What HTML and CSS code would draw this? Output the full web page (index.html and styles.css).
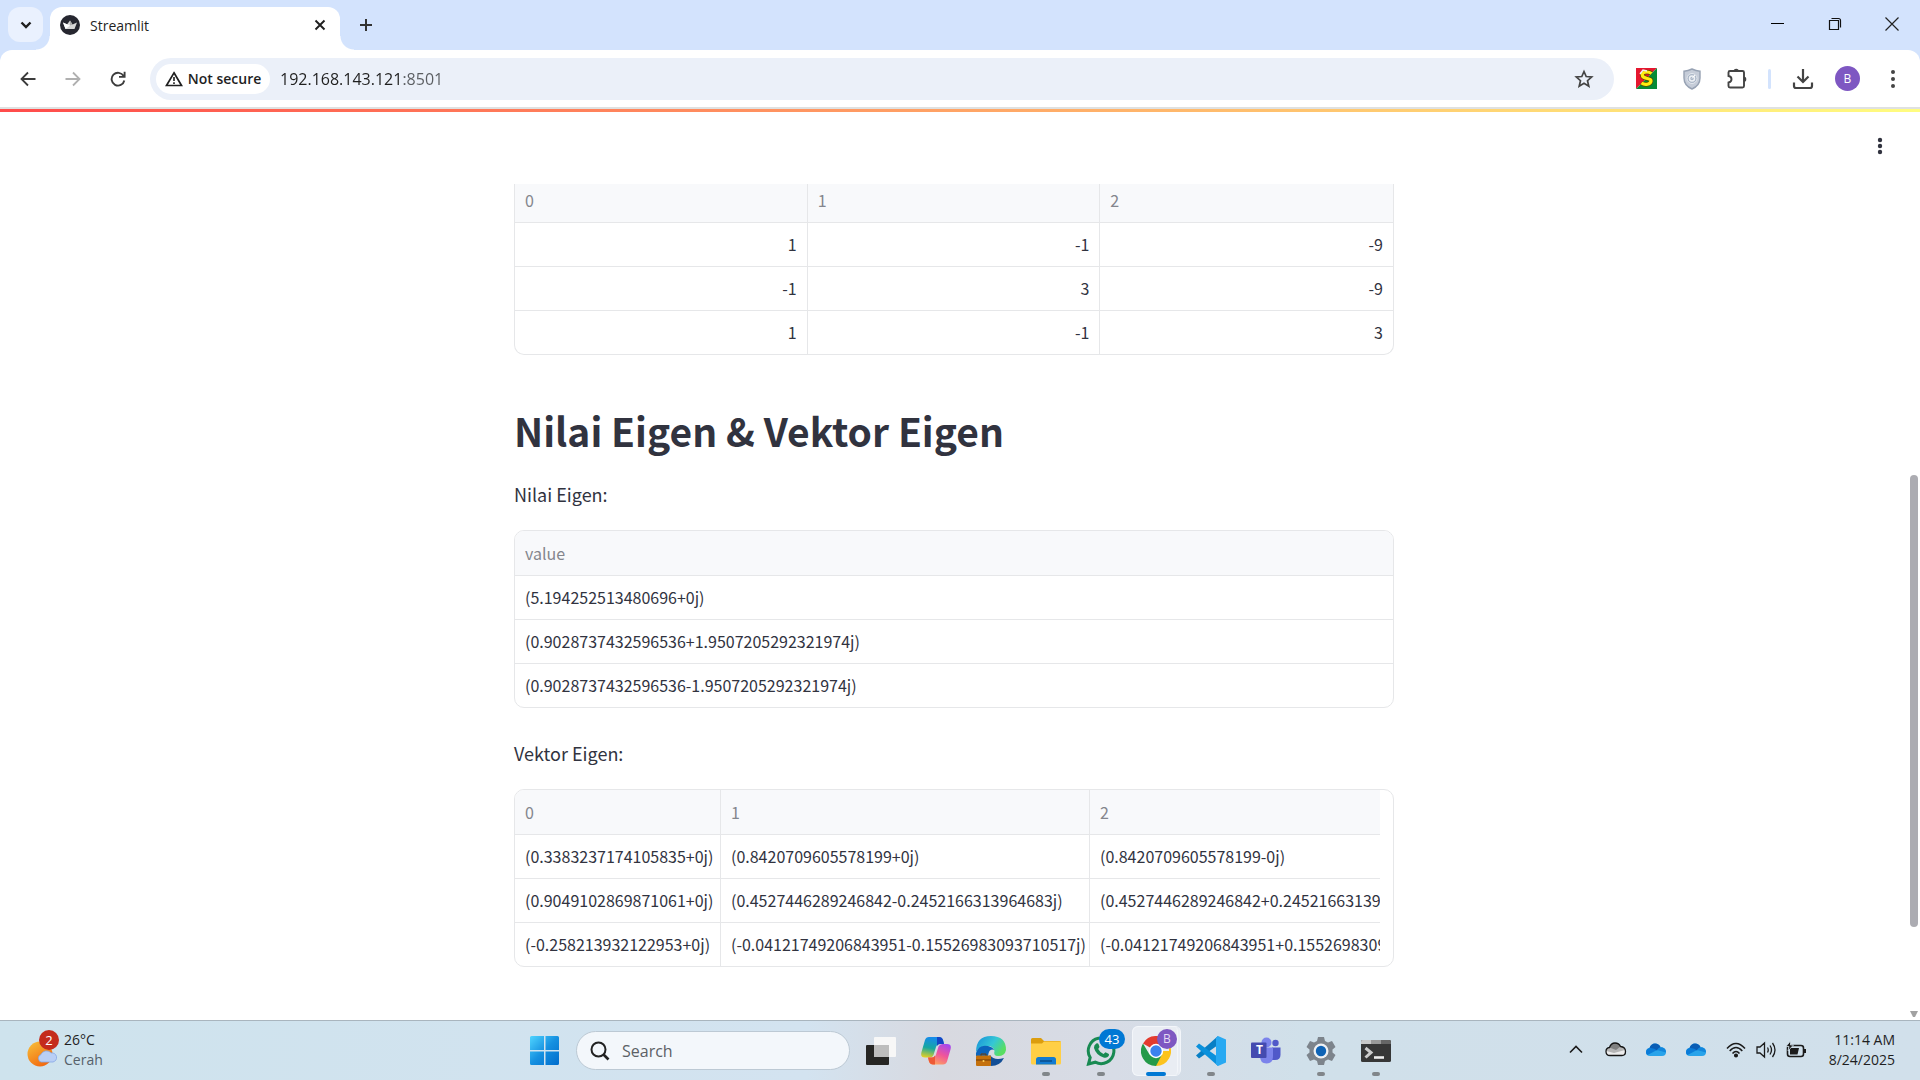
FILE: index.html
```html
<!DOCTYPE html>
<html lang="en">
<head>
<meta charset="utf-8">
<title>Streamlit</title>
<link rel="stylesheet" href="styles.css">
</head>
<body>
<div class="desktop">
  <header class="browser">
    <div class="tabstrip">
      <button class="tab-search" aria-label="Search tabs"><svg width="14" height="14" viewBox="0 0 14 14"><path d="M2.500 4.500L7 9l4.500-4.500" fill="none" stroke="#1f1f1f" stroke-width="2.400"/></svg></button>
      <div class="tab">
        <svg width="20" height="20" viewBox="0 0 20 20"><circle cx="10" cy="10" r="10" fill="#262730"/><path d="M3 7.500L7 9.500L10 5.500L12.500 9.500L17 7.500L14.500 14H5.500Z" fill="#d8d8d8"/><path d="M3 7.500L10 10.500L5.500 14Z" fill="#fff"/><path d="M17 7.500L10 10.500L10 5.500L12.500 9.500Z" fill="#aaa"/></svg>
        <span class="tab-title">Streamlit</span>
        <button class="icon-btn" aria-label="Close tab"><svg width="12" height="12" viewBox="0 0 12 12"><path d="M1.500 1.500l9 9m0-9l-9 9" stroke="#1f1f1f" stroke-width="1.900"/></svg></button>
      </div>
      <button class="new-tab" aria-label="New tab"><svg width="14" height="14" viewBox="0 0 14 14"><path d="M7 1v12M1 7h12" stroke="#333" stroke-width="2"/></svg></button>
      <div class="window-controls">
        <button aria-label="Minimize"><svg width="14" height="14" viewBox="0 0 14 14"><path d="M0 6.500h13" stroke="#000"/></svg></button>
        <button aria-label="Restore"><svg width="14" height="14" viewBox="0 0 14 14"><path d="M1.500 3.500h9v9h-9zM3.500 1.500h7q2 0 2 2v7" fill="none" stroke="#111" stroke-width="1.200"/></svg></button>
        <button aria-label="Close"><svg width="14" height="14" viewBox="0 0 14 14"><path d="M.5 .5l13 13m0-13l-13 13" stroke="#222" stroke-width="1.200"/></svg></button>
      </div>
    </div>
    <div class="toolbar">
      <div class="nav">
        <button aria-label="Back"><svg width="16" height="16" viewBox="0 0 16 16"><path d="M15.500 8H2M8 1.500L1.500 8L8 14.500" fill="none" stroke="#3c3c3c" stroke-width="1.800"/></svg></button>
        <button aria-label="Forward"><svg width="16" height="16" viewBox="0 0 16 16"><path d="M.5 8H14M8 1.500L14.500 8L8 14.500" fill="none" stroke="#b0b0b0" stroke-width="1.800"/></svg></button>
        <button aria-label="Reload"><svg width="16" height="16" viewBox="0 0 16 16"><path d="M13.600 5A6.400 6.400 0 1 0 14.300 9.500M14.600 .8V5.900H9" fill="none" stroke="#3c3c3c" stroke-width="1.900"/></svg></button>
      </div>
      <div class="omnibox">
        <button class="chip"><svg width="18" height="16" viewBox="0 0 18 16"><path d="M9 1.800L16.500 14.500H1.500Z" fill="none" stroke="#1f1f1f" stroke-width="1.700"/><path d="M9 6v4M9 11.200v1.800" stroke="#1f1f1f" stroke-width="1.600"/></svg>Not secure</button>
        <input class="url" type="text" aria-label="Address" value="192.168.143.121:8501">
        <button class="star" aria-label="Bookmark"><svg width="20" height="20" viewBox="0 0 20 20"><path d="M10 2.500L12.200 7.500L17.700 8L13.500 11.700L14.800 17.200L10 14.200L5.200 17.200L6.500 11.700L2.300 8L7.800 7.500Z" fill="none" stroke="#444" stroke-width="1.700"/></svg></button>
      </div>
      <div class="extensions">
        <button aria-label="S extension"><svg width="21" height="21" viewBox="0 0 21 21"><path d="M0 0H21L0 21Z" fill="#e5172f"/><path d="M21 0V21H0Z" fill="#078b36"/><path d="M15.500 5.500C11 2.500 5 4.500 6.500 8S15.500 9.500 15 13S9 17.500 5.500 15" fill="none" stroke="#5c4700" stroke-width="4.600"/><path d="M15.500 5.500C11 2.500 5 4.500 6.500 8S15.500 9.500 15 13S9 17.500 5.500 15" fill="none" stroke="#ffee10" stroke-width="3.200"/><path d="M4 6L7 2l4 1" stroke="#eee" stroke-width="1.500" fill="none"/></svg></button>
        <button aria-label="Shield extension"><svg width="18" height="22" viewBox="0 0 18 22"><path d="M9 1Q13 3 17 3.200V10Q17 17.500 9 21Q1 17.500 1 10V3.200Q5 3 9 1Z" fill="#c5ccd8" stroke="#97a2b3" stroke-width="1.400"/><circle cx="9" cy="10.500" r="5" fill="#a9b5c6" stroke="#e5e9ef"/><circle cx="9" cy="10.500" r="2.500" fill="none" stroke="#eef1f5" stroke-width="1.500"/><path d="M9 10.500l3-3.500" stroke="#fff"/></svg></button>
        <button aria-label="Extensions"><svg width="22" height="22" viewBox="0 0 22 22"><path d="M2.500 4.500Q2.500 3 4 3H16.500Q18 3 18 4.500V18Q18 19.500 16.500 19.500H4Q2.500 19.500 2.500 18V14.500Q5.500 14 5.500 11.200T2.500 8Z" fill="none" stroke="#444" stroke-width="1.900"/><path d="M7.500 3.500a2.700 2.700 0 0 1 5.400 0zM17.700 8.600a2.600 2.600 0 0 1 0 5.200z" fill="#444"/></svg></button>
        <span class="divider"></span>
        <button aria-label="Downloads"><svg width="22" height="22" viewBox="0 0 22 22"><path d="M11 1v12M5.500 8.500L11 14l5.500-5.500M2 14.500V18q0 2 2 2H18q2 0 2-2V14.500" fill="none" stroke="#444" stroke-width="2.200"/></svg></button>
        <button class="avatar">B</button>
        <button aria-label="Menu"><svg width="6" height="20" viewBox="0 0 6 20" fill="#444"><circle cx="3" cy="3" r="2"/><circle cx="3" cy="10" r="2"/><circle cx="3" cy="17" r="2"/></svg></button>
      </div>
    </div>
  </header>

  <div class="viewport">
    <div class="app">
      <div class="decoration"></div>
      <div class="app-header"><button aria-label="Main menu"><svg width="6" height="18" viewBox="0 0 6 18" fill="#31333f"><circle cx="3" cy="3" r="2.200"/><circle cx="3" cy="9" r="2.200"/><circle cx="3" cy="15" r="2.200"/></svg></button></div>
      <main class="block">
        <div class="frame frame-scrolled">
          <table class="data numeric">
            <thead><tr><th>0</th><th>1</th><th>2</th></tr></thead>
            <tbody>
              <tr><td>1</td><td>-1</td><td>-9</td></tr>
              <tr><td>-1</td><td>3</td><td>-9</td></tr>
              <tr><td>1</td><td>-1</td><td>3</td></tr>
            </tbody>
          </table>
        </div>
        <h1>Nilai Eigen &amp; Vektor Eigen</h1>
        <p>Nilai Eigen:</p>
        <div class="frame">
          <table class="data">
            <thead><tr><th>value</th></tr></thead>
            <tbody>
              <tr><td>(5.194252513480696+0j)</td></tr>
              <tr><td>(0.9028737432596536+1.9507205292321974j)</td></tr>
              <tr><td>(0.9028737432596536-1.9507205292321974j)</td></tr>
            </tbody>
          </table>
        </div>
        <p>Vektor Eigen:</p>
        <div class="frame">
          <div class="clip">
            <table class="data vectors">
              <colgroup><col class="col-a"><col class="col-b"><col class="col-b"></colgroup>
              <thead><tr><th>0</th><th>1</th><th>2</th></tr></thead>
              <tbody>
                <tr><td>(0.3383237174105835+0j)</td><td>(0.8420709605578199+0j)</td><td>(0.8420709605578199-0j)</td></tr>
                <tr><td>(0.9049102869871061+0j)</td><td>(0.4527446289246842-0.2452166313964683j)</td><td>(0.4527446289246842+0.2452166313964683j)</td></tr>
                <tr><td>(-0.258213932122953+0j)</td><td>(-0.04121749206843951-0.15526983093710517j)</td><td>(-0.04121749206843951+0.15526983093710517j)</td></tr>
              </tbody>
            </table>
          </div>
        </div>
      </main>
    </div>
    <div class="scrollbar"><span class="thumb"></span><svg width="8" height="6" viewBox="0 0 8 6"><path d="M0 0h8L5 6H3z" fill="#a2a2a2"/></svg></div>
  </div>

  <footer class="taskbar">
    <button class="weather">
      <span class="weather-icon">
        <svg width="30" height="36" viewBox="0 0 30 36"><defs><linearGradient id="sun" x1="0" y1="0" x2=".6" y2="1"><stop offset="0" stop-color="#f7c23a"/><stop offset="1" stop-color="#f26a10"/></linearGradient></defs><circle cx="13" cy="22" r="12.500" fill="url(#sun)"/><path d="M14 30a4 4 0 0 1 0-7.500a6 6 0 0 1 10-1.500a4.500 4.500 0 0 1 2 9z" fill="#b9cff5" stroke="#86a7e6" stroke-width=".8"/></svg>
        <span class="badge badge-red">2</span>
      </span>
      <span class="weather-text"><span>26°C</span><span class="muted">Cerah</span></span>
    </button>

    <div class="pinned">
      <button class="task" aria-label="Start"><svg width="30" height="30" viewBox="0 0 30 30"><defs><linearGradient id="win" x1="0" y1="0" x2="1" y2="1"><stop offset="0" stop-color="#4fd4ff"/><stop offset=".5" stop-color="#1590e0"/><stop offset="1" stop-color="#006ccc"/></linearGradient></defs><path d="M1.500 0H14V14H0V1.500Q0 0 1.500 0ZM15.500 0H27.500Q29 0 29 1.500V14H15.500ZM0 15.500H14V29H1.500Q0 29 0 27.500ZM15.500 15.500H29V27.500Q29 29 27.500 29H15.500Z" fill="url(#win)"/></svg></button>
      <label class="search"><svg width="20" height="20" viewBox="0 0 20 20"><circle cx="8.500" cy="8.500" r="7" fill="none" stroke="#222" stroke-width="2"/><path d="M13.500 13.500l5 5" stroke="#222" stroke-width="2.600"/></svg><input type="text" placeholder="Search" aria-label="Search"></label>
      <button class="task" aria-label="Task view"><svg width="30" height="28" viewBox="0 0 30 28"><rect y="8" width="23" height="20" rx="1" fill="#262624"/><rect x="8" width="22" height="20" rx="1" fill="#f7f7f7"/><rect x="8" y="8" width="15" height="12" fill="#bdbdbd"/></svg></button>
      <button class="task" aria-label="Copilot"><svg width="30" height="28" viewBox="0 0 30 28"><defs><linearGradient id="cpa" x1=".3" y1="0" x2=".1" y2="1"><stop offset="0" stop-color="#168bea"/><stop offset=".5" stop-color="#16a7a0"/><stop offset="1" stop-color="#f0d21c"/></linearGradient><linearGradient id="cpb" x1=".8" y1="0" x2=".3" y2="1"><stop offset="0" stop-color="#a547ef"/><stop offset=".5" stop-color="#f0559a"/><stop offset="1" stop-color="#ffa45c"/></linearGradient></defs><path d="M8 0H18Q21 0 22 3L23 7H19Q16 7 15 10L12.500 18Q11.500 20.500 8.500 20.500H4Q-1 20.500 .5 15L4 3Q5 0 8 0Z" fill="url(#cpa)"/><path d="M16 0h2q3 0 4 3l1 4h-4q-2 0-3 2z" fill="#1445c4"/><path d="M22 27.500H12Q9 27.500 8 24.500L7 20.500H11Q14 20.500 15 17.500L17.500 9.500Q18.500 7 21.500 7H26Q31 7 29.500 12.500L26 24.500Q25 27.500 22 27.500Z" fill="url(#cpb)"/><path d="M14 27.500h-2q-3 0-4-3l-1-4h4q2 0 3-2z" fill="#ee5a36"/></svg></button>
      <button class="task" aria-label="Edge"><svg width="30" height="30" viewBox="0 0 30 30"><defs><linearGradient id="edge" x1="0" y1="0" x2="1" y2=".5"><stop offset="0" stop-color="#168edb"/><stop offset=".6" stop-color="#35c7d5"/><stop offset="1" stop-color="#58de62"/></linearGradient></defs><path d="M0 16Q0 0 15 0T30 14Q29 20 22 20Q17 20 18.500 15Q17 10 12 10Q4 9 0 16Z" fill="url(#edge)"/><path d="M0 17Q3 8 12 10Q17 11 18 14Q13 12 12 20H0Z" fill="#0b64bd"/><path d="M14 19Q18 25 28 22Q24 30 15 30Q12 28 12 22Z" fill="#124e96"/><rect y="19.500" width="15" height="10.500" rx="1" fill="#c4700c"/><path d="M5 19.500v-1.500h5v1.500M0 24h15" stroke="#6e3a06" fill="none"/><circle cx="7.500" cy="25" r="1" fill="#ffd257"/></svg></button>
      <button class="task running" aria-label="File Explorer"><svg width="30" height="28" viewBox="0 0 30 28"><path d="M1.500 1H10L13 4H28.500Q30 4 30 5.500V10H0V2.500Q0 1 1.500 1Z" fill="#dc9d0e"/><path d="M0 6.500H11L13 4.500H30V26Q30 27.500 28.500 27.500H1.500Q0 27.500 0 26Z" fill="#ffcf46"/><path d="M5 27.500V22.500Q5 20 7.500 20H22.500Q25 20 25 22.500V27.500Z" fill="#137bd0"/><path d="M9 24h12" stroke="#0a4c8b" stroke-width="1.500"/></svg></button>
      <button class="task running" aria-label="WhatsApp"><svg width="30" height="30" viewBox="0 0 30 30"><path d="M2.500 28L4.200 21.500A12.800 12.800 0 1 1 9.300 26.200Z" fill="none" stroke="#188a52" stroke-width="3"/><path d="M10.200 7.500Q12 6.700 12.700 8.500L13.500 11L12.200 13Q14 16.500 17.500 18L19.500 16.200L22.500 17.700Q23.500 18.200 22.700 20Q21 22.500 17.500 21.500Q10 19 8 12Q7.700 9 10.200 7.500Z" fill="#188a52"/></svg><span class="badge badge-blue">43</span></button>
      <button class="task running active" aria-label="Chrome"><svg width="30" height="30" viewBox="0 0 30 30"><path d="M15 15L2 7.500A15 15 0 0 1 28 7.500Z" fill="#e33b2e"/><path d="M15 15H28V7.500A15 15 0 0 1 15 30L10 27Z" fill="#fcc31e"/><path d="M15 15L21 18.500L15 30A15 15 0 0 1 2 7.500L8.500 18.500Z" fill="#249a49"/><circle cx="15" cy="15" r="7.200" fill="#fff"/><circle cx="15" cy="15" r="5.700" fill="#3b82ee"/></svg><span class="badge badge-purple">B</span></button>
      <button class="task running" aria-label="Visual Studio Code"><svg width="30" height="30" viewBox="0 0 30 30"><path d="M22 0L0 19.500L3 22.500L22 9Z" fill="#087fc5"/><path d="M22 30L0 10.500L3 7.500L22 21Z" fill="#0b91dc"/><path d="M22 0L30 3.500V26.500L22 30L20 28V2Z" fill="#28a9f2"/></svg></button>
      <button class="task" aria-label="Teams"><svg width="30" height="28" viewBox="0 0 30 28"><circle cx="15.500" cy="5.500" r="5" fill="#7b83eb"/><circle cx="24.500" cy="6" r="3.200" fill="#5059c9"/><path d="M21 10.500H29.500V18Q29.500 23 24 23H21Z" fill="#5059c9"/><path d="M11 10.500H22V19Q22 26.500 15.500 26.500T9 19V10.500Z" fill="#7b83eb"/><rect y="5.500" width="15.500" height="15.500" rx="1" fill="#444bb0"/></svg><span class="teams-t">T</span></button>
      <button class="task running" aria-label="Settings"><svg width="30" height="30" viewBox="0 0 30 30"><path d="M12 1h6l1 4l3 1.500l4-1.500l3.500 6l-3 2.500v3l3 2.500l-3.500 6l-4-1.500l-3 1.500l-1 4h-6l-1-4l-3-1.500l-4 1.500l-3.500-6l3-2.500v-3l-3-2.500l3.500-6l4 1.500l3-1.500z" fill="#7d848c"/><circle cx="15" cy="15" r="7.500" fill="#eef1f4"/><circle cx="15" cy="15" r="5.200" fill="#0f63b5"/></svg></button>
      <button class="task running" aria-label="Terminal"><svg width="30" height="24" viewBox="0 0 30 24"><rect y="1" width="30" height="22" rx="1.500" fill="#373737"/><path d="M0 5V2.500Q0 1 1.500 1H10V5Z" fill="#c9c9c9"/><path d="M10 1h10v4H10z" fill="#999"/><path d="M20 1h8.500q1.500 0 1.500 1.500V5H20z" fill="#666"/><path d="M4.500 9l5.500 4.500l-5.500 5" fill="none" stroke="#ccc" stroke-width="3"/><path d="M13 18.500h10" stroke="#eee" stroke-width="2.600"/></svg></button>
    </div>

    <div class="tray">
      <button class="tray-cell" aria-label="Show hidden icons"><svg width="14" height="9" viewBox="0 0 14 9"><path d="M1 7.500L7 1.500L13 7.500" fill="none" stroke="#1b1b1b" stroke-width="1.600"/></svg></button>
      <button class="tray-cell" aria-label="OneDrive offline"><svg width="22" height="15" viewBox="0 0 22 15"><path d="M5 13.500Q1 13.500 1 9.500Q1 6 4.500 5.500Q6 1 10 1Q14 1 15.500 4.500Q20.500 5 20.500 9.500Q20.500 13.500 17 13.500Z" fill="#ededed"/><path d="M1.500 9Q2 6 4.500 5.500Q6 1 10 1Q14 1 15.500 4.500Q19 5 20 8L9 11Z" fill="#b5b5b5"/><path d="M4.500 5.500Q6 1 10 1Q14 1 15.500 4.500L11 8Z" fill="#808080"/><path d="M5 13.500Q1 13.500 1 9.500Q1 6 4.500 5.500Q6 1 10 1Q14 1 15.500 4.500Q20.500 5 20.500 9.500Q20.500 13.500 17 13.500Z" fill="none" stroke="#151515" stroke-width="1.300"/></svg></button>
      <button class="tray-cell" aria-label="OneDrive"><svg width="20" height="14" viewBox="0 0 20 14"><path d="M4 13Q0 13 0 9Q0 5.500 3.500 5Q5 .5 9 .5T14.500 4Q20 4.500 20 9Q20 13 16 13Z" fill="#28a3ea"/><path d="M0 9.500Q0 5.500 3.500 5Q7 3.500 11 7L1.500 12Q0 11 0 9.500Z" fill="#0b7cd8"/><path d="M3.500 5Q5 .5 9 .5T14.500 4L11 7.500Q8 4.500 3.500 5Z" fill="#0a5db5"/><path d="M11 7Q13 3.500 16.500 4.500Q20 5.500 20 9.500Z" fill="#1286dc"/></svg></button>
      <button class="tray-cell" aria-label="OneDrive work"><svg width="20" height="14" viewBox="0 0 20 14"><path d="M4 13Q0 13 0 9Q0 5.500 3.500 5Q5 .5 9 .5T14.500 4Q20 4.500 20 9Q20 13 16 13Z" fill="#28a3ea"/><path d="M0 9.500Q0 5.500 3.500 5Q7 3.500 11 7L1.500 12Q0 11 0 9.500Z" fill="#0b7cd8"/><path d="M3.500 5Q5 .5 9 .5T14.500 4L11 7.500Q8 4.500 3.500 5Z" fill="#0a5db5"/><path d="M11 7Q13 3.500 16.500 4.500Q20 5.500 20 9.500Z" fill="#1286dc"/></svg></button>
      <button class="status" aria-label="Network, volume and battery">
        <svg width="20" height="16" viewBox="0 0 20 16" fill="none" stroke="#1b1b1b" stroke-width="1.500"><path d="M1 6.500Q10-3.500 19 6.500M3.700 9Q10 2 16.300 9M6.500 11.500Q10 7.500 13.500 11.500"/><circle cx="10" cy="13.500" r="1.300" fill="#1b1b1b"/></svg>
        <svg width="20" height="18" viewBox="0 0 20 18" fill="none" stroke="#1b1b1b" stroke-width="1.300"><path d="M1 6H4L8.500 2V16L4 12H1ZM11.500 6.500Q13 9 11.500 11.500M14 4.500Q17 9 14 13.500M16.500 2Q21.500 9 16.500 16"/></svg>
        <svg width="20" height="17" viewBox="0 0 20 17"><rect x="1.500" y="4.500" width="16" height="11" rx="2.500" fill="none" stroke="#1b1b1b" stroke-width="1.600"/><path d="M4 7h9l-1.500 6.500H4zM18 8h2v4h-2z" fill="#1b1b1b"/><path d="M4.500 0L0 5.500H3L2 10L7.500 4H4.500Z" fill="#1b1b1b" stroke="#d0e0ea" stroke-width=".8"/></svg>
      </button>
      <button class="clock"><span>11:14 AM</span><span>8/24/2025</span></button>
    </div>
  </footer>
</div>
</body>
</html>
```
FILE: styles.css
```css
* { box-sizing: border-box; }

body { margin: 0; }

button, input {
  font: inherit;
  color: inherit;
  border: 0;
  padding: 0;
  background: none;
  outline: 0;
}

button {
  display: flex;
  align-items: center;
  justify-content: center;
}

svg { display: block; flex: none; }

.desktop {
  display: flex;
  flex-direction: column;
  height: 100vh;
  overflow: hidden;
  background: #fff;
  color: #1f1f1f;
  font-family: "Open Sans", "Noto Sans", sans-serif;
  font-size: 14px;
}

/* Browser frame */

.browser {
  flex: none;
  background: #d3e3fd;
  border-bottom: 2px solid #dfe1e1;
}

.tabstrip {
  display: flex;
  height: 50px;
  padding: 7px 0 0 8px;
}

.tab-search {
  width: 35px;
  height: 35px;
  margin-right: 7px;
  border-radius: 12px;
  background: #eaf1fe;
}

.tab {
  position: relative;
  display: flex;
  align-items: center;
  gap: 10px;
  width: 290px;
  padding: 0 14px 7px 10px;
  border-radius: 12px 12px 0 0;
  background: #fff;
}

.tab::before,
.tab::after {
  content: "";
  position: absolute;
  bottom: 0;
  width: 14px;
  height: 14px;
}

.tab::before {
  right: 100%;
  background: radial-gradient(circle at 0 0, transparent 13px, #fff 14px);
}

.tab::after {
  left: 100%;
  background: radial-gradient(circle at 100% 0, transparent 13px, #fff 14px);
}

.tab-title { flex: 1; }

.new-tab { width: 52px; height: 36px; }

.window-controls {
  display: flex;
  height: 34px;
  margin-left: auto;
}

.window-controls button { width: 57px; }

.toolbar {
  display: flex;
  align-items: center;
  height: 57px;
  padding: 0 5px 0 5px;
  border-radius: 12px 12px 0 0;
  background: #fff;
}

.nav { display: flex; width: 145px; }

.nav button { width: 45px; height: 36px; }

.omnibox {
  flex: 1;
  display: flex;
  align-items: center;
  height: 42px;
  padding: 0 20px 0 6px;
  border-radius: 21px;
  background: #ebf0f9;
}

.chip {
  gap: 5px;
  width: 114px;
  height: 30px;
  border-radius: 15px;
  background: #fff;
  font-weight: 600;
  font-size: 14px;
}

.url {
  flex: 1;
  margin-left: 10px;
  font-size: 16px;
  background: linear-gradient(90deg, #1f1f1f 124px, #5a5d61 124px);
  background-clip: text;
  color: transparent;
}

.extensions {
  display: flex;
  align-items: center;
  padding-left: 10px;
}

.extensions button { width: 45px; height: 36px; }

.divider {
  width: 3px;
  height: 20px;
  margin: 0 9px;
  border-radius: 2px;
  background: #d3e3fd;
}

.extensions .avatar {
  width: 25px;
  height: 25px;
  margin: 0 10px;
  border-radius: 50%;
  background: #7e57c2;
  color: #fff;
  font-size: 12px;
}

/* Streamlit app */

.viewport {
  flex: 1;
  display: flex;
  min-height: 0;
}

.app {
  flex: 1;
  min-width: 0;
  color: #31333f;
  font-family: "Noto Sans CJK SC", sans-serif;
}

.decoration {
  height: 3px;
  margin-right: -12px;
  background: linear-gradient(90deg, #ff4b4b, #fffd80);
}

.app-header {
  display: flex;
  justify-content: flex-end;
  height: 72px;
  padding: 16px 10px;
}

.app-header button { width: 36px; height: 36px; }

.block { width: 880px; margin: 0 auto; }

.block h1 {
  margin: 48px 0 22px;
  font-size: 39px;
  line-height: 54px;
  font-weight: 600;
}

.block p {
  margin: 30px 0 21px;
  font-size: 18px;
  line-height: 30px;
}

.block h1 + p { margin-top: 0; }

.frame {
  overflow: hidden;
  border: 1px solid #e6e7e9;
  border-radius: 10px;
}

.frame-scrolled {
  border-top: 0;
  border-radius: 0 0 10px 10px;
}

.clip { margin-right: 13px; overflow: hidden; }

.data {
  width: 100%;
  table-layout: fixed;
  border-collapse: separate;
  border-spacing: 0;
  font-size: 16px;
  line-height: 24px;
}

.vectors { width: 944px; }

.col-a { width: 206px; }

.col-b { width: 369px; }

.data th,
.data td {
  height: 44px;
  padding: 0 10px 2px;
  border-bottom: 1px solid #e6e7e9;
  border-right: 1px solid #e6e7e9;
  font-weight: 400;
  text-align: left;
  white-space: nowrap;
}

.data th {
  height: 45px;
  padding-bottom: 0;
  background: #f8f9fb;
  color: #84868d;
}

.frame-scrolled th { height: 39px; padding-bottom: 6px; }

.numeric td { text-align: right; }

.data tr > :last-child { border-right: 0; }

.data tbody tr:last-child td { height: 43px; border-bottom: 0; }

.scrollbar {
  display: flex;
  flex-direction: column;
  align-items: center;
  width: 12px;
  padding: 366px 0 3px;
}

.thumb {
  flex: 1;
  width: 8px;
  margin-bottom: 84px;
  border-radius: 4px;
  background: #acacb2;
}

/* Taskbar */

.taskbar {
  flex: none;
  display: grid;
  grid-template-columns: 1fr auto 1fr;
  align-items: center;
  height: 60px;
  border-top: 1px solid #a9b5be;
  background: linear-gradient(90deg, #cee3ed 0%, #d3e3f0 42%, #d8d9e0 49%, #d7dce6 58%, #d0e0ea 68%, #d1e0eb 100%);
}

.weather {
  justify-self: start;
  gap: 7px;
  padding: 0 0 2px 27px;
  line-height: 20px;
  text-align: left;
}

.weather-icon { position: relative; }

.weather-text { display: flex; flex-direction: column; }

.muted { color: #56616a; }

.badge {
  position: absolute;
  top: -2px;
  right: -2px;
  min-width: 20px;
  height: 20px;
  border-radius: 10px;
  color: #fff;
  font-size: 13px;
  line-height: 20px;
  text-align: center;
}

.badge-red { background: #c42b1c; }

.pinned { display: flex; align-items: center; }

.task {
  position: relative;
  width: 55px;
  height: 50px;
}

.running::after {
  content: "";
  position: absolute;
  bottom: 0;
  left: 24px;
  width: 8px;
  height: 4px;
  border-radius: 2px;
  background: #81868a;
}

.active::before {
  content: "";
  position: absolute;
  inset: 0 2px 0 4px;
  border: 1px solid #f3f6fa;
  border-right: 4px double #f3f6fa;
  border-radius: 6px;
  background: #e9edf3;
}

.active svg { position: relative; }

.active::after {
  left: 18px;
  width: 20px;
  background: #0078d4;
}

.pinned .badge-blue {
  top: 3px;
  right: 3px;
  width: 26px;
  background: #0078d4;
}

.pinned .badge-purple {
  top: 3px;
  right: 6px;
  background: #7e57c2;
  color: #e5dcf4;
  font-size: 12px;
}

.teams-t {
  position: absolute;
  left: 18px;
  top: 16px;
  color: #fff;
  font-size: 12px;
  font-weight: 700;
  line-height: 16px;
}

.search {
  display: flex;
  align-items: center;
  gap: 12px;
  width: 274px;
  height: 39px;
  margin: 0 3px 0 4px;
  padding: 0 13px;
  border: 1px solid #bcc9d4;
  border-radius: 20px;
  background: #f3f7fb;
  font-size: 16px;
}

.search input { flex: 1; min-width: 0; }

.search input::placeholder { color: #5c6166; opacity: 1; }

.tray {
  display: flex;
  align-items: center;
  justify-self: end;
  padding: 0 25px 2px 0;
}

.tray-cell { width: 40px; height: 40px; }

.status { gap: 10px; margin: 0 10px; height: 40px; }

.clock {
  flex-direction: column;
  align-items: flex-end;
  width: 79px;
  line-height: 20px;
}
```
